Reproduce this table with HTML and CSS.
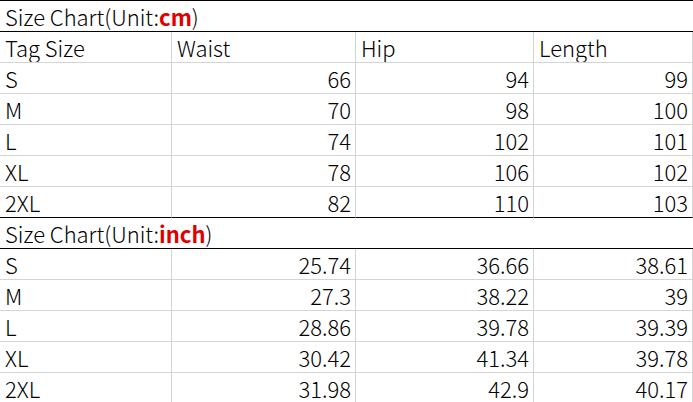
FILE: index.html
```html
<!DOCTYPE html>
<html>
<head>
<meta charset="utf-8">
<link rel="stylesheet" href="styles.css">
</head>
<body>
<table class="chart">
  <colgroup>
    <col class="c1"><col class="c2"><col class="c3"><col class="c4">
  </colgroup>
  <tr class="title first"><td colspan="4">Size Chart(Unit:<b class="unit">cm</b>)</td></tr>
  <tr><td>Tag Size</td><td>Waist</td><td>Hip</td><td>Length</td></tr>
  <tr><td>S</td><td class="n">66</td><td class="n">94</td><td class="n">99</td></tr>
  <tr><td>M</td><td class="n">70</td><td class="n">98</td><td class="n">100</td></tr>
  <tr><td>L</td><td class="n">74</td><td class="n">102</td><td class="n">101</td></tr>
  <tr><td>XL</td><td class="n">78</td><td class="n">106</td><td class="n">102</td></tr>
  <tr class="last"><td>2XL</td><td class="n">82</td><td class="n">110</td><td class="n">103</td></tr>
  <tr class="title"><td colspan="4">Size Chart(Unit:<b class="unit">inch</b>)</td></tr>
  <tr><td>S</td><td class="n">25.74</td><td class="n">36.66</td><td class="n">38.61</td></tr>
  <tr><td>M</td><td class="n">27.3</td><td class="n">38.22</td><td class="n">39</td></tr>
  <tr><td>L</td><td class="n">28.86</td><td class="n">39.78</td><td class="n">39.39</td></tr>
  <tr><td>XL</td><td class="n">30.42</td><td class="n">41.34</td><td class="n">39.78</td></tr>
  <tr><td>2XL</td><td class="n">31.98</td><td class="n">42.9</td><td class="n">40.17</td></tr>
</table>
</body>
</html>
```
FILE: styles.css
```css
html, body {
  margin: 0;
  padding: 0;
  background: #fff;
}
.chart {
  border-collapse: separate;
  border-spacing: 0;
  table-layout: fixed;
  width: 693px;
  font-family: "Noto Sans CJK SC", "Noto Sans", sans-serif;
  font-size: 22px;
  font-weight: 300;
  color: #000;
}
.c1 { width: 172px; }
.c2 { width: 184px; }
.c3 { width: 178px; }
.c4 { width: 159px; }
.chart td {
  box-sizing: border-box;
  height: 31px;
  padding: 1px 4px 0 5px;
  border-right: 1px solid #d4d4d4;
  border-bottom: 1px solid #d4d4d4;
  white-space: nowrap;
  overflow: hidden;
  line-height: 29px;
}
.chart td.n {
  text-align: right;
}
.chart .title td {
  border-right: none;
  border-bottom: 1px solid #000;
}
.chart .first td {
  height: 32px;
  border-top: 1px solid #000;
}
.chart .last td {
  border-bottom-color: #000;
}
.unit {
  color: #e00000;
  font-weight: bold;
}
```
